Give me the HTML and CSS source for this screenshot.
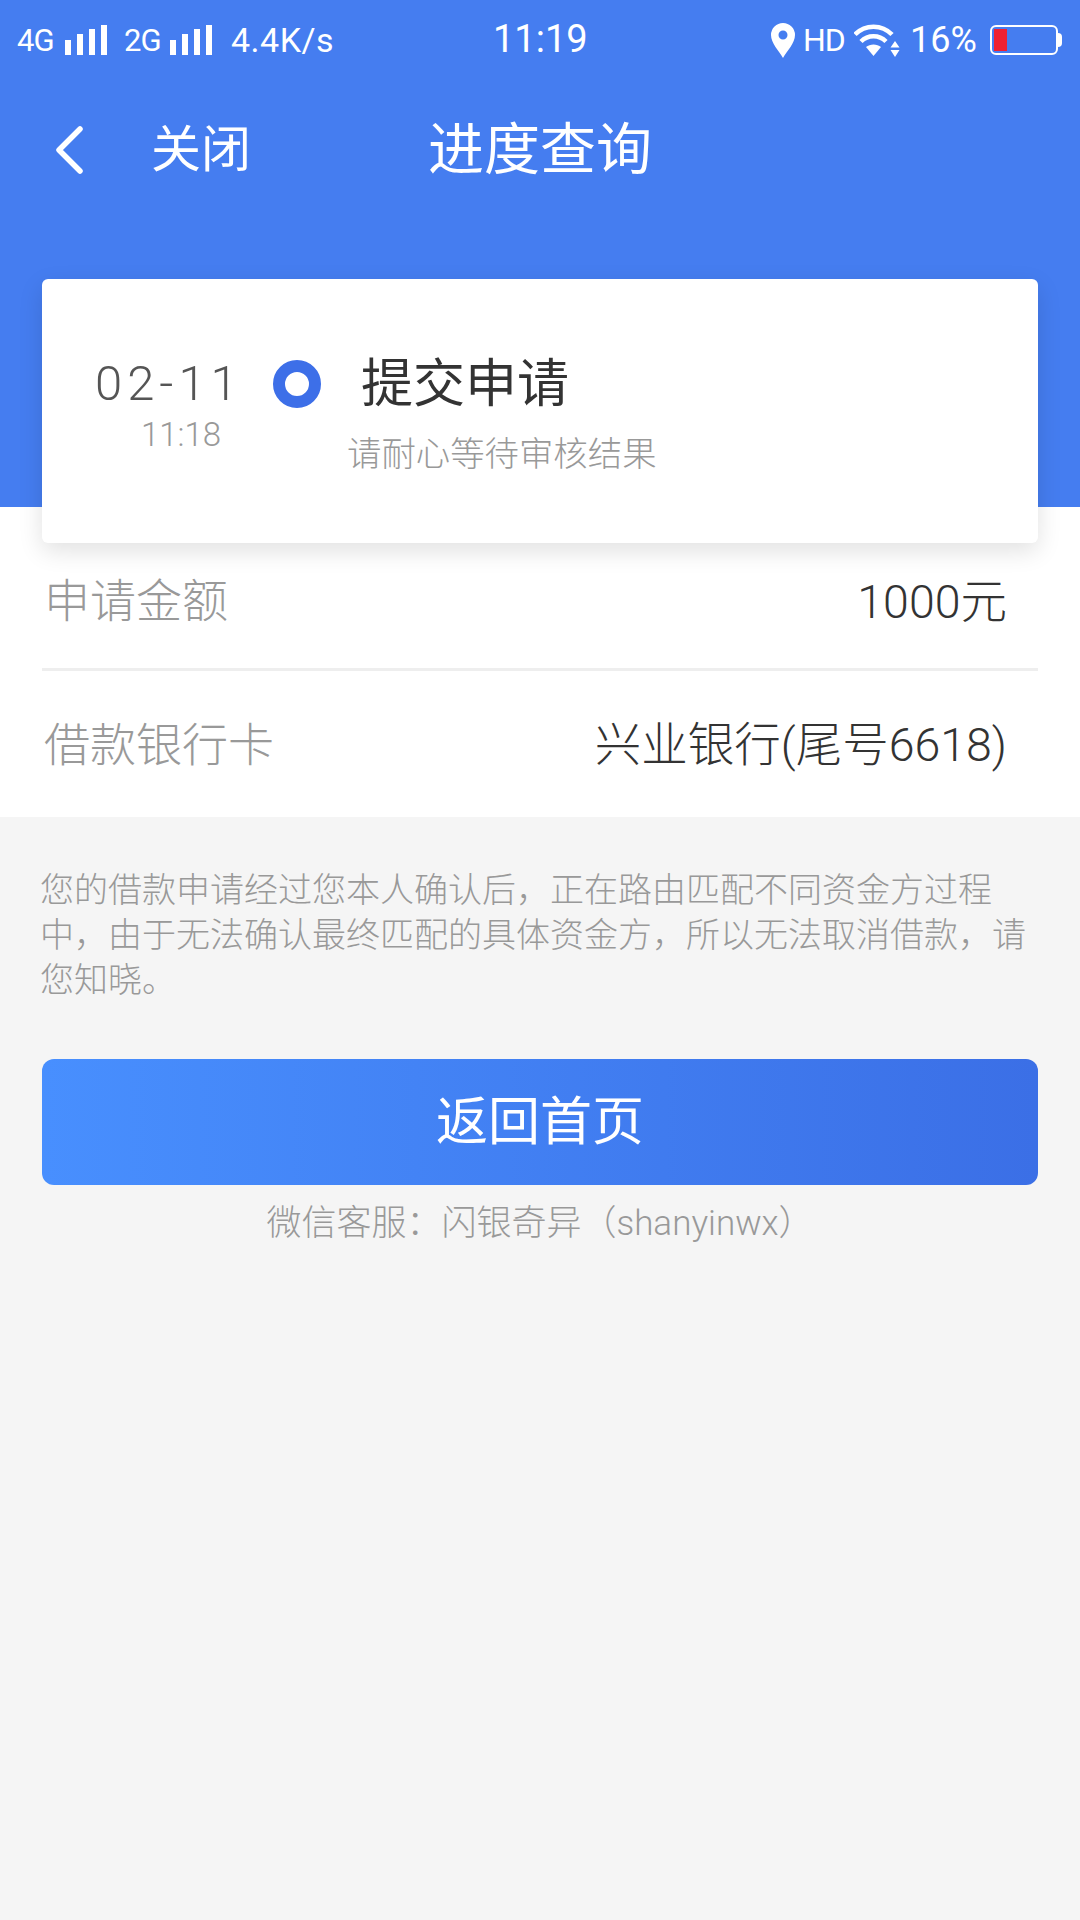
FILE: index.html
```html
<!DOCTYPE html>
<html lang="zh-CN">
<head>
<meta charset="utf-8">
<title>进度查询</title>
<link rel="stylesheet" href="styles.css">
</head>
<body>
<div class="page">
  <section class="hero">
    <div class="status">
      <div class="status-left">
        <span class="net">4G</span>
        <svg class="bars" width="42" height="30" viewBox="0 0 42 30"><path d="M0 15h6v15H0zM12 9h6v21h-6zM24 4h6v26h-6zM36 0h6v30h-6z" fill="#fff"/></svg>
        <span class="net net-2">2G</span>
        <svg class="bars" width="42" height="30" viewBox="0 0 42 30"><path d="M0 15h6v15H0zM12 9h6v21h-6zM24 4h6v26h-6zM36 0h6v30h-6z" fill="#fff"/></svg>
        <span class="speed">4.4K/s</span>
      </div>
      <div class="clock">11:19</div>
      <div class="status-right">
        <svg class="pin" width="24" height="35" viewBox="0 0 24 35"><path fill-rule="evenodd" d="M12 0a12 12 0 0 1 12 12c0 8-8 16-12 23C8 28 0 20 0 12A12 12 0 0 1 12 0zm0 7.500a4.500 4.500 0 1 0 0 9 4.500 4.500 0 0 0 0-9z" fill="#fff"/></svg>
        <span class="hd">HD</span>
        <svg class="wifi" width="46" height="33" viewBox="0 0 46 33"><path d="M1 10.500C11 0 28 0 38 10.500M7 17.500c7-7 18-7 25 0" fill="none" stroke="#fff" stroke-width="4.500"/><path d="M12 23c4-3.500 11-3.500 15 0l-7.500 9z" fill="#fff"/><path d="M41 17l4.500 6.500h-9zM41 33l4.500-7h-9z" fill="#fff"/></svg>
        <span class="pct">16%</span>
        <div class="battery"><div class="battery-fill"></div></div>
        <div class="battery-nub"></div>
      </div>
    </div>
    <header class="nav">
      <svg class="back" width="28" height="48" viewBox="0 0 28 48"><path d="M25 3L4 24l21 21" fill="none" stroke="#fff" stroke-width="5.500" stroke-linecap="round" stroke-linejoin="round"/></svg>
      <span class="close">关闭</span>
      <h1 class="title">进度查询</h1>
    </header>
    <div class="card">
      <div class="when">
        <div class="date">02-11</div>
        <div class="time">11:18</div>
      </div>
      <div class="dot"></div>
      <div class="what">
        <div class="what-title">提交申请</div>
        <div class="what-sub">请耐心等待审核结果</div>
      </div>
    </div>
  </section>
  <section class="details">
    <div class="row row-amount">
      <span class="label">申请金额</span>
      <span class="value">1000元</span>
    </div>
    <div class="row row-bank">
      <span class="label">借款银行卡</span>
      <span class="value">兴业银行(尾号6618)</span>
    </div>
  </section>
  <section class="foot">
    <p class="note">您的借款申请经过您本人确认后，正在路由匹配不同资金方过程中，由于无法确认最终匹配的具体资金方，所以无法取消借款，请您知晓。</p>
    <button class="home" type="button">返回首页</button>
    <p class="service">微信客服：闪银奇异（shanyinwx）</p>
  </section>
</div>
</body>
</html>
```
FILE: styles.css
```css
* { box-sizing: border-box; }
html, body { margin: 0; padding: 0; }
body {
  width: 1080px;
  height: 1920px;
  overflow: hidden;
  background: #f5f5f5;
  font-family: Roboto, "Noto Sans CJK SC", sans-serif;
  font-weight: 300;
}
.page { display: flex; flex-direction: column; height: 1920px; }

.hero {
  height: 507px;
  flex: none;
  background: #457df0;
  color: #fff;
  display: flex;
  flex-direction: column;
  position: relative;
  z-index: 1;
}
.status {
  height: 80px;
  flex: none;
  display: flex;
  align-items: center;
  justify-content: space-between;
  padding: 0 18px 0 17px;
  position: relative;
  font-weight: 400;
}
.status-left, .status-right { display: flex; align-items: center; }
.net { font-size: 31px; letter-spacing: -1px; width: 48px; }
.net-2 { margin-left: 17px; width: 46px; }
.speed { font-size: 34px; margin-left: 19px; letter-spacing: 0.5px; }
.clock {
  position: absolute;
  left: 493px;
  top: 17px;
  font-size: 38px;
  line-height: 44px;
}
.hd { font-size: 32px; margin-left: 8px; letter-spacing: -1px; width: 51px; }
.pct { font-size: 36px; margin-left: 10px; width: 80px; }
.battery {
  width: 68px;
  height: 30px;
  border: 2px solid #fff;
  border-radius: 6px;
  padding: 2px;
}
.battery-fill { width: 13px; height: 100%; background: #ee2233; }
.battery-nub { width: 4px; height: 14px; background: #fff; border-radius: 0 4px 4px 0; }

.nav {
  height: 140px;
  flex: none;
  display: flex;
  align-items: center;
  padding: 0 0 0 55px;
  position: relative;
}
.close { font-size: 50px; margin: 0 0 10px 68px; font-weight: 400; }
.title {
  position: absolute;
  left: 0;
  right: 0;
  top: 35px;
  margin: 0;
  text-align: center;
  font-size: 56px;
  line-height: 70px;
  font-weight: 400;
}
.card {
  margin: 59px 42px 0;
  height: 264px;
  flex: none;
  background: #fff;
  border-radius: 6px;
  box-shadow: 0 8px 24px rgba(0, 0, 0, 0.12);
  display: flex;
  align-items: flex-start;
  padding: 0 0 0 53px;
}
.when { width: 178px; flex: none; margin-top: 77px; white-space: nowrap; }
.date { font-size: 49px; line-height: 56px; letter-spacing: 5px; color: #555; }
.time { font-size: 33px; line-height: 40px; color: #999; margin: 3px 0 0 46px; }
.dot {
  width: 48px;
  height: 48px;
  flex: none;
  margin: 81px 0 0 0;
  border: 12px solid #3d6fe8;
  border-radius: 50%;
  background: #fff;
}
.what { margin: 73px 0 0 26px; }
.what-title { font-size: 52px; line-height: 66px; margin-left: 14px; color: #333; font-weight: 400; }
.what-sub { font-size: 34.400px; line-height: 44px; margin-top: 14px; color: #999; }

.details { height: 310px; background: #fff; flex: none; }
.row {
  margin: 0 42px;
  display: flex;
  justify-content: space-between;
  align-items: center;
  padding: 0 31px 0 2px;
}
.row-amount { height: 164px; padding-top: 19px; border-bottom: 3px solid #eee; }
.row-bank { height: 146px; padding-bottom: 7px; }
.label { color: #999; font-size: 46px; }
.value { color: #333; font-size: 46.500px; }

.foot { padding: 0 42px; }
.note {
  margin: 51px 0 0 -2px;
  font-size: 34px;
  line-height: 45px;
  color: #999;
}
.home {
  display: block;
  width: 100%;
  height: 126px;
  margin-top: 56px;
  padding: 0 0 9px;
  border: 0;
  border-radius: 12px;
  background: linear-gradient(90deg, #488ffe, #3b6fe6);
  color: #fff;
  font-family: inherit;
  font-size: 52px;
  font-weight: 400;
}
.service {
  margin: 15px 0 0;
  text-align: center;
  font-size: 35px;
  line-height: 48px;
  color: #999;
}
```
